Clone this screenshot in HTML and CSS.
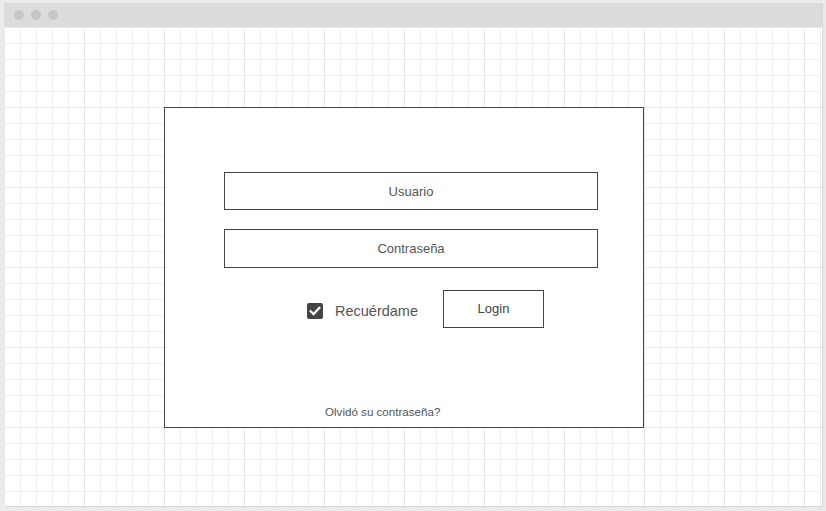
FILE: index.html
```html
<!DOCTYPE html>
<html lang="es">
<head>
<meta charset="utf-8">
<title>Login</title>
<link rel="stylesheet" href="styles.css">
</head>
<body>
<div class="window">
  <div class="titlebar">
    <span class="dot"></span><span class="dot"></span><span class="dot"></span>
  </div>
  <div class="canvas">
    <div class="card">
      <div class="field">Usuario</div>
      <div class="field field-2">Contraseña</div>
      <div class="row">
        <span class="check">
          <svg width="16" height="16" viewBox="0 0 16 16"><path d="M3.6 8.2 L6.6 11.1 L12.4 4.9" fill="none" stroke="#fff" stroke-width="2.2" stroke-linecap="square"/></svg>
        </span>
        <span class="remember">Recuérdame</span>
        <span class="btn">Login</span>
      </div>
      <div class="forgot">Olvidó su contraseña?</div>
    </div>
  </div>
</div>
</body>
</html>
```
FILE: styles.css
```css
html, body {
  margin: 0;
  padding: 0;
}
body {
  background: #ebebeb;
  font-family: "Liberation Sans", Arial, sans-serif;
  width: 826px;
  height: 511px;
  overflow: hidden;
}
.window {
  margin: 3px 4px 0 4px;
  width: 818px;
  height: 503px;
  display: flex;
  flex-direction: column;
  box-shadow: 1px 1px 0 #d8d8d8;
}
.titlebar {
  height: 23px;
  background: #dcdcdc;
  display: flex;
  align-items: center;
  gap: 7px;
  padding-left: 10px;
  padding-bottom: 1px;
}
.dot {
  width: 10px;
  height: 10px;
  border-radius: 50%;
  background: #c6c6c6;
}
.canvas {
  flex: 1;
  background-color: #fff;
  background-image:
    linear-gradient(to right, #e8e8e8 0, #e8e8e8 1px, transparent 1px),
    linear-gradient(to bottom, #e8e8e8 0, #e8e8e8 1px, transparent 1px),
    linear-gradient(to right, #f0f0f0 0, #f0f0f0 1px, transparent 1px),
    linear-gradient(to bottom, #f0f0f0 0, #f0f0f0 1px, transparent 1px);
  background-size: 80px 80px, 80px 80px, 16px 16px, 16px 16px;
  background-position: 0 0, 0 0, 0 0, 0 0;
  display: flex;
  align-items: flex-start;
}
.card {
  box-sizing: border-box;
  width: 480px;
  height: 321px;
  margin: 80px 0 0 160px;
  border: 1px solid #444;
  background: #fff;
  display: flex;
  flex-direction: column;
  padding: 64px 0 0 59px;
}
.field {
  box-sizing: border-box;
  width: 374px;
  height: 38px;
  border: 1px solid #444;
  display: flex;
  align-items: center;
  justify-content: center;
  font-size: 13px;
  color: #555;
}
.field-2 {
  margin-top: 19px;
  height: 39px;
}
.row {
  display: flex;
  align-items: center;
  margin: 22px 0 0 83px;
}
.check {
  width: 16px;
  height: 16px;
  border-radius: 2px;
  background: #444;
  display: block;
  margin-top: 3px;
}
.check svg {
  display: block;
}
.remember {
  margin-left: 12px;
  font-size: 14.5px;
  color: #555;
  margin-top: 4px;
}
.btn {
  box-sizing: border-box;
  margin-left: 25px;
  width: 101px;
  height: 38px;
  border: 1px solid #444;
  display: flex;
  align-items: center;
  justify-content: center;
  font-size: 13px;
  color: #444;
  padding-bottom: 2px;
}
.forgot {
  margin-top: auto;
  margin-left: 101px;
  padding-bottom: 9px;
  font-size: 11.6px;
  line-height: 13px;
  color: #555;
}
```
